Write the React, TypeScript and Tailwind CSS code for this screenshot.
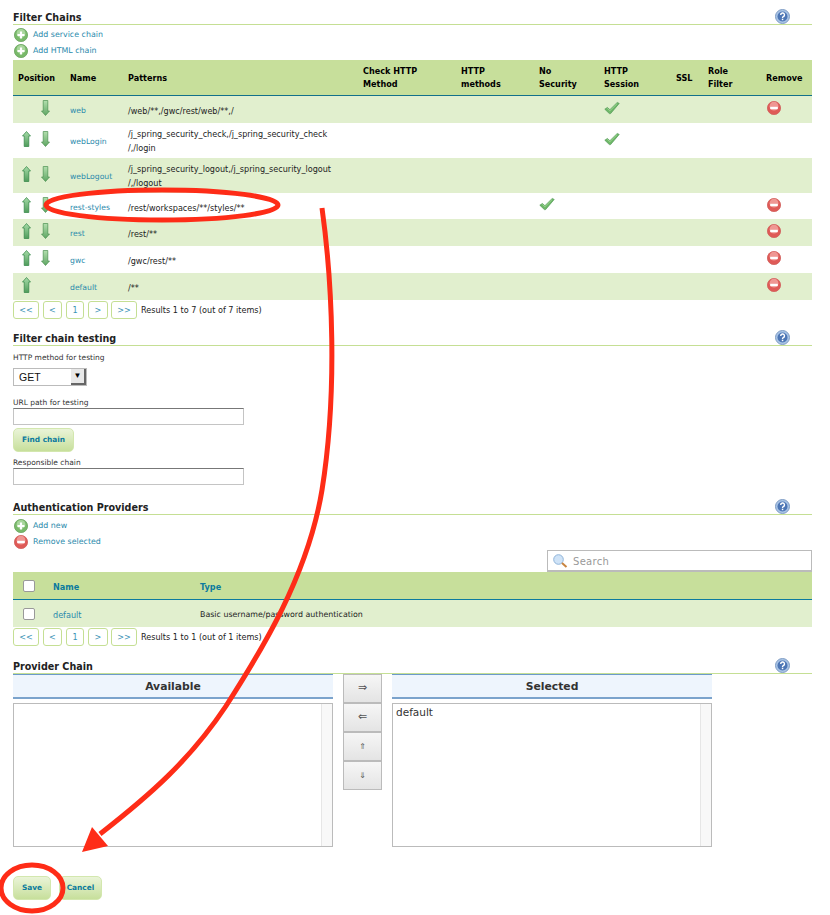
import React from 'react';

const rows = [
  { name: 'web', patterns: ['/web/**,/gwc/rest/web/**,/'], h: 'h-[27px]', down: true, session: true, remove: true },
  { name: 'webLogin', patterns: ['/j_spring_security_check,/j_spring_security_check', '/,/login'], h: 'h-[35px]', up: true, down: true, session: true },
  { name: 'webLogout', patterns: ['/j_spring_security_logout,/j_spring_security_logout', '/,/logout'], h: 'h-[35px]', up: true, down: true },
  { name: 'rest-styles', patterns: ['/rest/workspaces/**/styles/**'], h: 'h-[26px]', up: true, down: true, noSecurity: true, remove: true },
  { name: 'rest', patterns: ['/rest/**'], h: 'h-[27px]', up: true, down: true, remove: true },
  { name: 'gwc', patterns: ['/gwc/rest/**'], h: 'h-[27px]', up: true, down: true, remove: true },
  { name: 'default', patterns: ['/**'], h: 'h-[27px]', up: true, remove: true },
];

const pages = [
  { label: '<<', cls: 'w-[26px] mr-[4px]' },
  { label: '<', cls: 'w-[19px] mr-[4px]' },
  { label: '1', cls: 'w-[18px] mr-[4px]' },
  { label: '>', cls: 'w-[20px] mr-[3px]' },
  { label: '>>', cls: 'w-[26px] mr-[4px]' },
];

const cols = 'grid grid-cols-[57px_58px_235px_98px_78px_65px_72px_32px_58px_46px]';

const HelpIcon = () => (
  <svg width="15" height="15" viewBox="0 0 15 15" className="absolute top-[-1px] right-[22px]">
    <circle cx="7.5" cy="7.5" r="7" fill="#a9c4e6" stroke="#7f9cc4" />
    <circle cx="7.5" cy="7.5" r="5" fill="#4d76b5" />
    <path d="M5.7 6a1.9 1.9 0 1 1 2.6 1.7c-.6.3-.8.6-.8 1.2" fill="none" stroke="#fff" strokeWidth="1.4" />
    <rect x="6.8" y="9.7" width="1.5" height="1.5" fill="#fff" />
  </svg>
);

const AddIcon = () => (
  <svg width="14" height="14" viewBox="0 0 14 14">
    <circle cx="7" cy="7" r="6.6" fill="#79b96a" stroke="#6aa55e" strokeWidth="0.8" />
    <circle cx="7" cy="5.4" r="4.4" fill="#a8d69c" />
    <path d="M7 3.5v7M3.5 7h7" stroke="#fff" strokeWidth="2.2" />
  </svg>
);

const RemoveIcon = () => (
  <svg width="14" height="14" viewBox="0 0 14 14">
    <circle cx="7" cy="7" r="6.6" fill="#df5a57" stroke="#d0605c" strokeWidth="0.8" />
    <circle cx="7" cy="5.2" r="4.4" fill="#ef9793" />
    <rect x="3.2" y="5.8" width="7.6" height="2.4" fill="#fff" />
  </svg>
);

const CheckIcon = () => (
  <svg width="16" height="14" viewBox="0 0 16 14">
    <path d="M.8 8.2l2.6-1.7 2.5 2.2L13.2 1.5l2 .9-8.6 10.2H5.4z" fill="#6fb868" stroke="#4f9655" strokeWidth="0.7" />
    <path d="M3.4 7.4l2.5 2.3 7.2-7.2" fill="none" stroke="#a8dd9e" strokeWidth="0.8" />
  </svg>
);

const ArrowUp = () => (
  <svg width="9" height="16" viewBox="0 0 9 16">
    <defs>
      <linearGradient id="upShaft" x1="0" y1="0" x2="0" y2="1">
        <stop offset="0" stopColor="#a6dba8" />
        <stop offset="1" stopColor="#4f9c5b" />
      </linearGradient>
    </defs>
    <path d="M4.5.5L8.5 5H6.8v10.5H2.2V5H.5z" fill="url(#upShaft)" stroke="#2f8444" strokeWidth="0.7" />
  </svg>
);

const ArrowDown = () => (
  <svg width="9" height="16" viewBox="0 0 9 16">
    <defs>
      <linearGradient id="downShaft" x1="0" y1="0" x2="0" y2="1">
        <stop offset="0" stopColor="#b3dfae" />
        <stop offset="1" stopColor="#5fa663" />
      </linearGradient>
    </defs>
    <path d="M4.5 15.5L8.5 11H6.8V.5H2.2V11H.5z" fill="url(#downShaft)" stroke="#4a8f50" strokeWidth="0.7" />
  </svg>
);

const SectionTitle = ({ title }: { title: string }) => (
  <div className="relative h-[15px] border-b border-[#c5df94] pt-[2px] text-[9.6px] leading-[11px] font-bold text-[#222]">
    {title}
    <HelpIcon />
  </div>
);

const IconLink = ({ icon, label }: { icon: React.ReactNode; label: string }) => (
  <div className="flex h-4 items-center gap-[5px] pl-[1px] text-[7.9px] text-[#2b8aac]">
    {icon}
    <span>{label}</span>
  </div>
);

const Pager = ({ results }: { results: string }) => (
  <div className="flex h-5 items-center text-[#222]">
    {pages.map((p) => (
      <span
        key={p.label}
        className={`flex h-[18px] items-center justify-center rounded-[3px] border border-[#c5df94] text-[#3b93b5] ${p.cls}`}
      >
        {p.label}
      </span>
    ))}
    <span>{results}</span>
  </div>
);

const GreenButton = ({ label, w }: { label: string; w: string }) => (
  <div
    className={`flex h-6 ${w} items-center justify-center rounded-[5px] border border-[#d3e7ae] bg-gradient-to-b from-[#eaf4d8] to-[#c7df9b] text-[7.4px] font-bold text-[#0b7a9e]`}
  >
    {label}
  </div>
);

const ListBox = ({ title, item }: { title: string; item?: string }) => (
  <div className="w-[320px]">
    <div className="flex h-[25px] items-center justify-center border-t border-b-2 border-t-[#6c9ac9] border-b-[#7ba3cc] bg-[#eef5fd] pt-[2px] text-[10.8px] font-bold text-[#333]">
      {title}
    </div>
    <div className="mt-1 flex h-[144px] border border-[#bbb]">
      <div className="flex-1 px-[3px] py-[1px] text-[10.5px] text-[#333]">{item}</div>
      <div className="w-[11px] border-l border-[#e6e6e6] bg-[#f8f8f8]" />
    </div>
  </div>
);

const MoveButton = ({ glyph, small }: { glyph: string; small?: boolean }) => (
  <div
    className={`flex h-[29px] w-[39px] items-center justify-center border border-[#bbb] bg-gradient-to-b from-[#f6f6f6] to-[#e4e4e4] text-[#555] ${
      small ? 'text-[8px]' : 'text-[11px]'
    }`}
  >
    {glyph}
  </div>
);

const Annotations = () => (
  <svg width="830" height="915" viewBox="0 0 830 915" className="pointer-events-none absolute top-0 left-0">
    <ellipse cx="162" cy="205" rx="116" ry="15" fill="none" stroke="#fe2c17" strokeWidth="5" />
    <path
      d="M322 208C332 280 338 390 322 490C308 575 262 650 226 706C190 760 150 795 100 834"
      fill="none"
      stroke="#fe2c17"
      strokeWidth="5"
    />
    <polygon points="82,852 92,827 108,846" fill="#fe2c17" />
    <ellipse cx="32" cy="888" rx="31" ry="23" fill="none" stroke="#fe2c17" strokeWidth="5" />
  </svg>
);

export default function App() {
  return (
    <div className="relative h-[915px] w-[830px] overflow-hidden bg-white pt-[10px] pr-[18px] pl-[13px] font-['DejaVu_Sans',sans-serif] text-[8.1px] text-[#222]">
      <SectionTitle title="Filter Chains" />
      <div className="pt-[2px]">
        <IconLink icon={<AddIcon />} label="Add service chain" />
        <IconLink icon={<AddIcon />} label="Add HTML chain" />
      </div>
      <div className={`${cols} mt-[1px] h-[36px] items-center border-b border-[#12708a] bg-[#c7df9b] pt-[1px] font-bold text-black`}>
        <span className="pl-[5px]">Position</span>
        <span>Name</span>
        <span>Patterns</span>
        <span className="leading-[13px]">Check HTTP<br />Method</span>
        <span className="leading-[13px]">HTTP<br />methods</span>
        <span className="leading-[13px]">No<br />Security</span>
        <span className="leading-[13px]">HTTP<br />Session</span>
        <span>SSL</span>
        <span className="leading-[13px]">Role<br />Filter</span>
        <span>Remove</span>
      </div>
      {rows.map((r, i) => (
        <div key={r.name} className={`${cols} ${r.h} items-center ${i % 2 === 0 ? 'bg-[#e1efce]' : 'bg-white'}`}>
          <div className="flex gap-[10px] pb-[3px] pl-[9px]">
            <span className="w-[9px]">{r.up && <ArrowUp />}</span>
            <span className="w-[9px]">{r.down && <ArrowDown />}</span>
          </div>
          <span className="pt-[3px] text-[7.7px] text-[#2b8aac]">{r.name}</span>
          <div className={`leading-[14px] ${r.patterns.length === 1 ? 'pt-[3px]' : ''}`}>
            {r.patterns.map((p) => (
              <div key={p}>{p}</div>
            ))}
          </div>
          <span />
          <span />
          <span className="pb-[4px]">{r.noSecurity && <CheckIcon />}</span>
          <span className="pb-[4px]">{r.session && <CheckIcon />}</span>
          <span />
          <span />
          <span className="pb-[3px] pl-[1px]">{r.remove && <RemoveIcon />}</span>
        </div>
      ))}
      <Pager results="Results 1 to 7 (out of 7 items)" />

      <div className="mt-[11px]">
        <SectionTitle title="Filter chain testing" />
      </div>
      <div className="mt-[6px] text-[7.5px] leading-[11px] text-[#333]">HTTP method for testing</div>
      <div className="mt-[5px] flex h-[18px] w-[74px] items-center justify-between border border-[#bbb] pl-[5px] font-['Liberation_Sans',sans-serif] text-[10.5px] text-[#111]">
        <span className="pt-[1px]">GET</span>
        <span className="flex h-4 w-[15px] items-center justify-center border-r-2 border-b-2 border-[#666] bg-[#e8e8e8] text-[8px] text-black">▼</span>
      </div>
      <div className="mt-[11px] text-[7.5px] leading-[11px] text-[#333]">URL path for testing</div>
      <div className="h-[17px] w-[231px] border border-[#c4c4c4] border-t-[#777]" />
      <div className="mt-[3px]">
        <GreenButton label="Find chain" w="w-[61px]" />
      </div>
      <div className="mt-[5px] text-[7.5px] leading-[11px] text-[#333]">Responsible chain</div>
      <div className="h-[17px] w-[231px] border border-[#c4c4c4] border-t-[#777]" />

      <div className="mt-[15px]">
        <SectionTitle title="Authentication Providers" />
      </div>
      <div className="pt-[3px]">
        <IconLink icon={<AddIcon />} label="Add new" />
        <IconLink icon={<RemoveIcon />} label="Remove selected" />
      </div>
      <div className="flex justify-end">
        <div className="flex h-[22px] w-[265px] items-center gap-[5px] border border-b-2 border-[#bbb] pl-[5px] text-[10px] tracking-[0.3px] text-[#999]">
          <svg width="15" height="14" viewBox="0 0 15 14">
            <circle cx="5.5" cy="5.5" r="4.8" fill="#cfe3f7" stroke="#8fb4d9" />
            <path d="M9 9l4.5 4" stroke="#c8843f" strokeWidth="2" />
          </svg>
          <span className="pt-[1px]">Search</span>
        </div>
      </div>
      <div className="grid h-[28px] grid-cols-[40px_147px_1fr] items-center border-b border-[#0b7a9e] bg-[#c7df9b] font-bold text-[#0b7a9e]">
        <div className="pl-[10px]">
          <div className="h-3 w-3 rounded-[2px] border border-[#999] bg-white" />
        </div>
        <span className="pt-[3px]">Name</span>
        <span className="pt-[3px]">Type</span>
      </div>
      <div className="grid h-[27px] grid-cols-[40px_147px_1fr] items-center bg-[#e1efce]">
        <div className="pl-[10px]">
          <div className="h-3 w-3 rounded-[2px] border border-[#999] bg-white" />
        </div>
        <span className="pt-[3px] text-[#2b8aac]">default</span>
        <span className="pt-[3px] text-[7.9px]">Basic username/password authentication</span>
      </div>
      <Pager results="Results 1 to 1 (out of 1 items)" />

      <div className="mt-[12px]">
        <SectionTitle title="Provider Chain" />
      </div>
      <div className="flex">
        <ListBox title="Available" />
        <div className="mx-[10px] flex h-[116px] w-[39px] flex-col">
          <MoveButton glyph="⇒" />
          <MoveButton glyph="⇐" />
          <MoveButton glyph="⇑" small />
          <MoveButton glyph="⇓" small />
        </div>
        <ListBox title="Selected" item="default" />
      </div>
      <div className="mt-[29px] flex gap-[8px]">
        <GreenButton label="Save" w="w-[38px]" />
        <GreenButton label="Cancel" w="w-[43px]" />
      </div>
      <Annotations />
    </div>
  );
}
